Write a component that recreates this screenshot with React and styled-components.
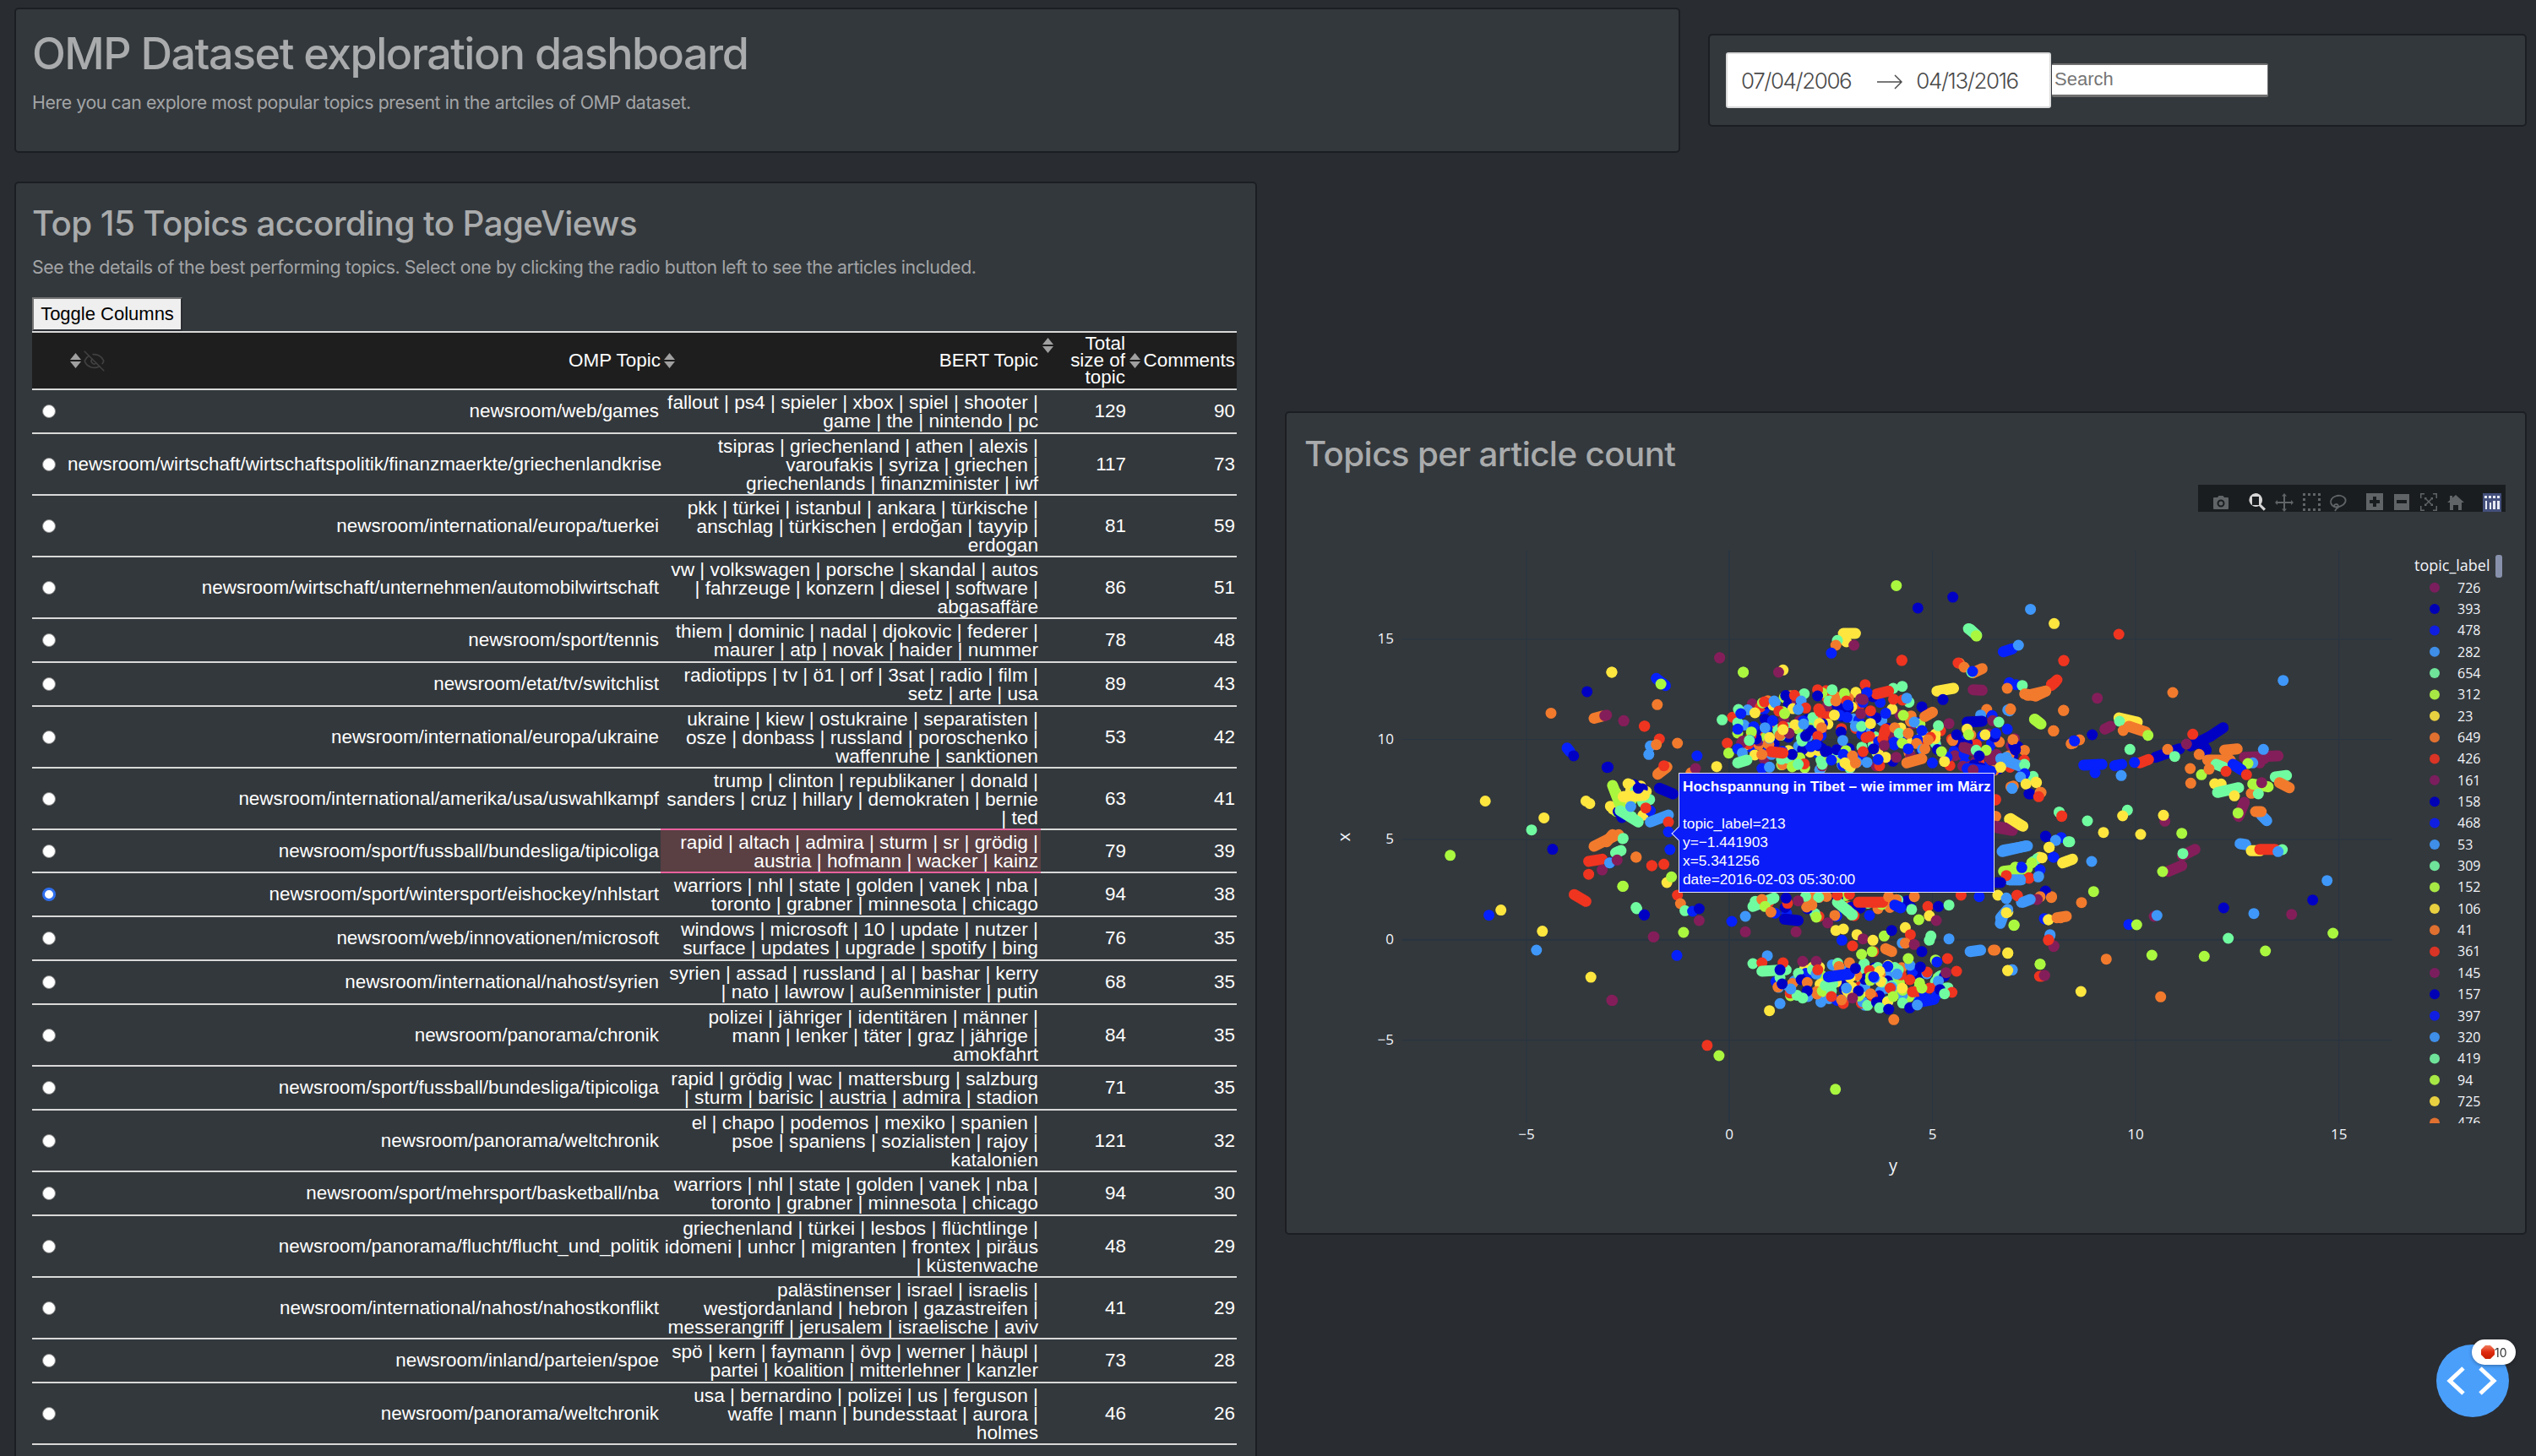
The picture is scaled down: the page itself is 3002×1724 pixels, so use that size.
import React from 'react'
import styled, { createGlobalStyle } from 'styled-components'
import { EyeOff } from 'lucide-react'

const GlobalStyle = createGlobalStyle`
	html, body {
		margin: 0;
		height: 1724px;
		overflow: hidden;
		background: #292c31;
	}
`

const Page = styled.div`
	display: flex;
	flex-direction: column;
	gap: 34px;
	padding: 9px 11px 0 17px;
	font-family: 'Liberation Sans', Arial, sans-serif;
	color: #fff;
`

const Row = styled.div`
	display: flex;
	align-items: ${(p) => p.$align || 'flex-start'};
	gap: 33px;
`

const Card = styled.section`
	box-sizing: border-box;
	flex: none;
	background: #33383c;
	border: 2px solid #1b1e22;
	border-radius: 5px;
`

const HeaderCard = styled(Card)`
	width: 1972px;
	height: 172px;
	padding: 23px 19px;
`

const DateCard = styled(Card)`
	display: flex;
	align-items: center;
	width: 969px;
	height: 110px;
	padding: 0 19px;
`

const TableCard = styled(Card)`
	width: 1471px;
	padding: 20px 19px 40px;
`

const GraphCard = styled(Card)`
	width: 1470px;
	height: 975px;
	margin-top: 272px;
	padding: 21px 21px 0;
`

const Title = styled.h1`
	margin: 0;
	font: 500 ${(p) => p.$size || 40.3}px/${(p) => p.$line || 56}px Inter, 'Liberation Sans', sans-serif;
	letter-spacing: ${(p) => p.$track || -0.6}px;
	color: #a9abac;
`

const Lead = styled.p`
	margin: ${(p) => p.$top || 9}px 0 0;
	font: 400 21.3px/28px Inter, 'Liberation Sans', sans-serif;
	letter-spacing: -0.4px;
	color: #a3a5a7;
`

const DateBox = styled.div`
	box-sizing: border-box;
	display: flex;
	align-items: center;
	width: 385px;
	height: 66px;
	padding: 0 16px;
	background: #fff;
	border: 2px solid #dbdbdb;
	border-radius: 3px;
	font: 300 26px Inter, 'Liberation Sans', sans-serif;
	letter-spacing: -1.4px;
	color: #4a4a4a;
`

const DateArrow = styled.svg`
	flex: none;
	width: 30px;
	height: 20px;
	margin: 4px 16px 0 31px;
`

const SearchInput = styled.input`
	box-sizing: border-box;
	width: 256px;
	height: 40px;
	margin-left: 1px;
	padding: 0 3px 2px;
	background: #fff;
	border: 0;
	border-top: 2px solid #6f6f6f;
	border-bottom: 3px solid #6f6f6f;
	border-right: 1px solid #6f6f6f;
	border-radius: 2px;
	font: 400 22px 'Liberation Sans', Arial, sans-serif;
	&::placeholder {
		color: #757575;
		opacity: 1;
	}
`

const ToggleButton = styled.button`
	display: block;
	box-sizing: border-box;
	width: 178px;
	height: 40px;
	margin-top: 22px;
	padding: 0;
	background: #efefef;
	border-style: solid;
	border-width: 2px;
	border-color: #767676 #2b2e33 #2b2e33 #767676;
	font: 400 22px 'Liberation Sans', Arial, sans-serif;
	color: #000;
`

const Table = styled.table`
	table-layout: fixed;
	width: 1426px;
	border-collapse: separate;
	border-spacing: 0;
	font-size: 22.45px;
	line-height: 22px;
`

const HeadRow = styled.tr`
	height: 70px;
`

const Th = styled.th`
	padding: 0;
	font-weight: 400;
	background: #1e1e1e;
	border-top: 2px solid #d9d9d9;
	border-bottom: 2px solid #d9d9d9;
`

const HeadInner = styled.div`
	display: flex;
	align-items: center;
	justify-content: ${(p) => p.$justify || 'flex-end'};
	padding-right: ${(p) => p.$right ?? 2}px;
`

const HeadStack = styled.div`
	width: 68px;
	line-height: 20px;
	text-align: right;
`

const SortIcon = styled.svg`
	flex: none;
	width: 13px;
	height: 18px;
	margin: ${(p) => p.$margin || 0};
	fill: #a0a0a0;
`

const HiddenEye = styled(EyeOff)`
	margin-left: 2px;
	color: #404040;
`

const BodyRow = styled.tr`
	height: ${(p) => p.$height}px;
`

const Td = styled.td`
	padding: 0 ${(p) => p.$right ?? 2}px 0 0;
	text-align: ${(p) => p.$align || 'right'};
	vertical-align: middle;
	white-space: nowrap;
	border-bottom: 2px solid #d9d9d9;
`

const TopicCell = styled(Td)`
	padding-right: 3px;
	font-size: 22.7px;
	background: ${(p) => (p.$hot ? '#5a3f43' : 'transparent')};
	border-bottom-color: ${(p) => (p.$hot ? '#e9629e' : '#d9d9d9')};
	box-shadow: ${(p) => (p.$hot ? '0 -2px 0 #e9629e' : 'none')};
`

const Radio = styled.input`
	display: block;
	appearance: none;
	box-sizing: border-box;
	width: 16px;
	height: 16px;
	margin: 0 0 0 12px;
	background: #fff;
	border-radius: 50%;
	border: ${(p) => (p.checked ? '3px solid #2f6fee' : '1px solid #8a8a8a')};
`

const ChartWrap = styled.div`
	position: relative;
	width: 1424px;
	height: 890px;
`

const ChartSvg = styled.svg`
	display: block;
	width: 1424px;
	height: 890px;
	font-family: 'Open Sans', sans-serif;
`

const Modebar = styled.div`
	position: absolute;
	top: 8px;
	right: 2px;
	display: flex;
	height: 32px;
	padding-left: 11px;
	background: #1a1d20;
	overflow: hidden;
`

const ModeGroup = styled.div`
	display: flex;
	margin-right: 11px;
`

const ModeButton = styled.div`
	display: flex;
	justify-content: center;
	width: 32px;
	height: 32px;
	padding-top: 10px;
	box-sizing: border-box;
	color: ${(p) => (p.$on ? '#d6d6d6' : '#606467')};
	svg {
		width: 22px;
		height: 22px;
		flex: none;
		background: ${(p) => (p.$box ? '#44507c' : 'transparent')};
	}
`

const HoverBox = styled.div`
	position: absolute;
	left: 443px;
	top: 349px;
	box-sizing: border-box;
	width: 374px;
	height: 142px;
	padding: 4px 2px 0 4px;
	background: #0a1cf8;
	border: 1.5px solid #e8e8f8;
	font-size: 17.3px;
	line-height: 22px;
	white-space: nowrap;
	&::before {
		content: '';
		position: absolute;
		left: -7px;
		top: 65px;
		width: 11px;
		height: 11px;
		background: #0a1cf8;
		border-left: 1.5px solid #e8e8f8;
		border-bottom: 1.5px solid #e8e8f8;
		transform: rotate(45deg);
	}
`

const HoverTitle = styled.div`
	margin-bottom: 22px;
	font-weight: 700;
`

const DebugWidget = styled.div`
	position: fixed;
	right: 32px;
	bottom: 46px;
	width: 86px;
	height: 86px;
	background: #4a9ffb;
	border-radius: 50%;
	svg.code {
		display: block;
		width: 86px;
		height: 86px;
	}
`

const ErrorBadge = styled.div`
	position: absolute;
	left: 42px;
	top: -6px;
	box-sizing: border-box;
	display: flex;
	align-items: center;
	width: 52px;
	height: 30px;
	padding-left: 11px;
	background: #fff;
	border-radius: 15px;
	box-shadow: 0 1px 4px rgba(0, 0, 0, 0.35);
	font: 400 14px Inter, sans-serif;
	color: #333;
`

const rows = [
	['newsroom/web/games', ['fallout | ps4 | spieler | xbox | spiel | shooter |', 'game | the | nintendo | pc'], 129, 90],
	['newsroom/wirtschaft/wirtschaftspolitik/finanzmaerkte/griechenlandkrise', ['tsipras | griechenland | athen | alexis |', 'varoufakis | syriza | griechen |', 'griechenlands | finanzminister | iwf'], 117, 73],
	['newsroom/international/europa/tuerkei', ['pkk | türkei | istanbul | ankara | türkische |', 'anschlag | türkischen | erdoğan | tayyip |', 'erdogan'], 81, 59],
	['newsroom/wirtschaft/unternehmen/automobilwirtschaft', ['vw | volkswagen | porsche | skandal | autos', '| fahrzeuge | konzern | diesel | software |', 'abgasaffäre'], 86, 51],
	['newsroom/sport/tennis', ['thiem | dominic | nadal | djokovic | federer |', 'maurer | atp | novak | haider | nummer'], 78, 48],
	['newsroom/etat/tv/switchlist', ['radiotipps | tv | ö1 | orf | 3sat | radio | film |', 'setz | arte | usa'], 89, 43],
	['newsroom/international/europa/ukraine', ['ukraine | kiew | ostukraine | separatisten |', 'osze | donbass | russland | poroschenko |', 'waffenruhe | sanktionen'], 53, 42],
	['newsroom/international/amerika/usa/uswahlkampf', ['trump | clinton | republikaner | donald |', 'sanders | cruz | hillary | demokraten | bernie', '| ted'], 63, 41],
	['newsroom/sport/fussball/bundesliga/tipicoliga', ['rapid | altach | admira | sturm | sr | grödig |', 'austria | hofmann | wacker | kainz'], 79, 39, 'hot'],
	['newsroom/sport/wintersport/eishockey/nhlstart', ['warriors | nhl | state | golden | vanek | nba |', 'toronto | grabner | minnesota | chicago'], 94, 38, 'selected'],
	['newsroom/web/innovationen/microsoft', ['windows | microsoft | 10 | update | nutzer |', 'surface | updates | upgrade | spotify | bing'], 76, 35],
	['newsroom/international/nahost/syrien', ['syrien | assad | russland | al | bashar | kerry', '| nato | lawrow | außenminister | putin'], 68, 35],
	['newsroom/panorama/chronik', ['polizei | jähriger | identitären | männer |', 'mann | lenker | täter | graz | jährige |', 'amokfahrt'], 84, 35],
	['newsroom/sport/fussball/bundesliga/tipicoliga', ['rapid | grödig | wac | mattersburg | salzburg', '| sturm | barisic | austria | admira | stadion'], 71, 35],
	['newsroom/panorama/weltchronik', ['el | chapo | podemos | mexiko | spanien |', 'psoe | spaniens | sozialisten | rajoy |', 'katalonien'], 121, 32],
	['newsroom/sport/mehrsport/basketball/nba', ['warriors | nhl | state | golden | vanek | nba |', 'toronto | grabner | minnesota | chicago'], 94, 30],
	['newsroom/panorama/flucht/flucht_und_politik', ['griechenland | türkei | lesbos | flüchtlinge |', 'idomeni | unhcr | migranten | frontex | piräus', '| küstenwache'], 48, 29],
	['newsroom/international/nahost/nahostkonflikt', ['palästinenser | israel | israelis |', 'westjordanland | hebron | gazastreifen |', 'messerangriff | jerusalem | israelische | aviv'], 41, 29],
	['newsroom/inland/parteien/spoe', ['spö | kern | faymann | övp | werner | häupl |', 'partei | koalition | mitterlehner | kanzler'], 73, 28],
	['newsroom/panorama/weltchronik', ['usa | bernardino | polizei | us | ferguson |', 'waffe | mann | bundesstaat | aurora |', 'holmes'], 46, 26]
]

const dotColors = {
	p: '#841e5a',
	d: '#0000c4',
	b: '#0520fb',
	l: '#3f97f9',
	m: '#70fba0',
	g: '#aaf73f',
	y: '#ffe63f',
	o: '#f27a2d',
	r: '#ef3420'
}

// dots read off the plot, each block in the scale of its own crop: x offset, y offset, x scale, y scale
const dotBlocks = [
	[1600, 650, 1.568, 1.96, `g 183 711;b 255 850;y 277 838;y 248 585;m 334 652;y 357 624;d 373 697;y 354 887;l 343 931;y 444 994;p 484 1048;o 370 381;y 483 286;d 437 331;o 450 393 465 388;p 470 387;p 505 399;r 544 411;b 400 462 405 470;d 412 480;d 474 507;y 435 585;y 442 591;r 413 802 435 818;g 503 783;m 528 832;d 543 849;p 561 900;r 660 1152;g 682 1176;g 898 1254;r 440 725 465 720;r 440 755;p 465 745;b 480 728;o 450 690 490 665;o 528 715;m 503 672;m 490 705 500 700;r 557 735;g 1011 85;d 1051 137;d 1116 112;l 1260 140;y 1304 173;r 1424 198;m 1145 185 1160 200;g 1160 202;p 683 253;g 727 286;r 1021 259;o 1128 265;r 1322 259`],
	[1900, 740, 2.8, 3, `y 790 30 830 30;y 800 60;m 770 55;o 765 72;p 825 72;b 750 100;m 1210 15 1230 35;g 1230 38;b 1320 95 1350 85;l 1370 72;p 380 116;r 984 125;y 22 168;g 458 168;y 590 160;p 575 168;b 170 190 200 215;g 185 210;r 1170 135;o 1250 155 1220 170;o 1190 150;m 1215 168;b 1218 165;r 1520 127;o 173 283;r 862 212;r 1490 205;o 1400 250 1460 235;r 1480 210;b 1340 205;b 1362 212;m 1383 215;o 1333 225;y 1100 235 1155 225;d 1120 265;p 1220 230 1250 232;m 985 218;m 955 225;r 900 245 940 235;b 868 240;p 855 265;l 1000 260;r 628 250;l 650 270;m 742 270;r 800 270;o 765 270;o 1520 303;o 1265 300;l 1340 305;o 1343 298;l 1245 320;b 1283 322;d 1200 345 1250 342;p 1285 340;m 1305 345;b 1333 370;o 1060 325 1085 310;l 1025 345;m 1105 358;p 1140 350;b 1050 375;g 1425 335 1445 352;o 1487 376;p 62 340;r 130 360;p 5 320;m 388 337;m 440 347;m 442 300;b 450 315;g 595 315;r 665 295;l 640 300;r 708 298;b 805 285;p 848 315;r 880 305;y 760 320;l 830 360;b 802 328;m 850 360;y 710 350;o 718 365;y 880 350;d 782 380;p 610 385;d 530 335;b 555 340;l 530 365;r 590 360;y 590 372;b 440 370;g 485 380;b 480 410;m 478 410;y 545 400;l 658 352;r 705 395;d 665 395;l 788 410;r 930 370 925 385;o 960 365;m 975 385;r 920 405;b 958 417;g 985 420;o 1005 385;p 925 428;r 865 400;r 405 420;g 410 455;b 305 465;o 240 420;r 180 405;l 150 430;l 145 460;o 170 425;b 440 440;l 455 455;m 440 490 470 480;d 620 460;b 700 425;r 550 450 590 455;o 520 460;d 730 450;b 790 460;r 855 450;o 820 465;d 890 440;y 930 470;p 965 470;b 1005 440;o 1060 440;g 1115 450;y 1125 485;b 1085 490;o 1000 490 1050 475;r 910 500;m 640 495;m 720 495;b 750 480;y 795 490;o 830 490;b 905 478;d 1200 420;b 1190 460;y 1260 390;b 1295 385;y 1200 370;g 1205 390;d 1165 390;p 1190 435 1290 470;m 1230 445;g 1263 445;d 1240 465;p 1280 480;l 1330 470;d 1360 443;l 1320 490;y 1310 505;b 1385 525;m 1390 495;y 1430 560;o 1345 575;l 1350 580;d 1405 600;r 1437 605;o 1445 595;o 1552 420;b 1553 412;b 1200 510 1280 520;p 1220 515;b 520 510;l 545 505;y 370 503;o 285 525;p 300 510;o 175 530 205 505;r 195 500;d 10 505;g 25 570 50 640;g 90 620;m 50 660 110 700;y 60 610 130 605;d 110 580;d 180 580 225 600;l 85 645;b 150 660;r 135 650;l 150 700 210 675;r 210 700;b 210 735;b 215 798;o 25 745 5 770;o 45 745;m 60 758;m 45 805;l 15 845;p 40 835;o 103 825;r 155 855;r 195 850;y 205 915;g 220 895;r 240 960;o 250 990;m 265 1015;b 290 1017;d 312 1008;p 312 1050;g 60 928;m 105 1008;d 130 1030;p 160 1108;g 260 1092;b 238 1174;p 22 1333;l 465 1035;b 420 1053;m 490 1000 560 970;o 520 975;g 530 1000;o 550 1020;d 600 970;p 640 980;d 595 1045 640 1050;p 633 1090;p 465 1090;g 700 1038;p 738 1058;m 770 985 820 1030;r 840 985 920 985;o 940 965;b 960 995 980 1005;r 770 960;o 1025 965;r 1070 1000;y 1075 1033;g 1040 1047;p 1098 1050;d 1105 1000;m 1140 995;b 1240 965;r 1180 960;l 1310 1060 1320 1030;y 1335 1020;g 1355 1067;d 1460 945;o 1480 965;b 1460 1045;y 1470 1047;o 1510 1040;l 1380 985;l 1330 970;p 1430 975;r 1365 960;d 1460 750;l 1495 765;m 1540 770;y 1472 790;b 1487 825;y 1530 840;l 1320 800 1400 785;o 1295 680;r 1295 620;y 1340 690 1385 715;p 1300 720 1350 730;m 1505 665;r 1513 680;y 1440 825;m 1420 840;g 1360 860;b 1380 860;l 1340 905 1380 905;l 1435 895;r 1405 900;r 1330 885;d 1300 915;y 765 1085;y 790 1080;b 785 1120;y 835 1100;r 820 1140;p 855 1115;y 888 1120;g 925 1105;r 890 1160;g 850 1170;g 885 1160;o 930 1150 950 1160;y 995 1075;r 1012 1100;d 950 1085;l 985 1130;o 995 1130;p 1025 1135;m 1075 1120;m 1080 1105;l 1140 1115;d 1050 1160;g 1005 1185;d 1045 1215;g 1095 1190;b 1100 1197;p 1130 1235;r 1165 1230;r 1135 1185;l 1210 1160 1245 1155;o 1287 1155;y 1335 1165;g 1442 1205;l 1350 1225;y 1335 1228;r 1440 1248;p 1457 1245;l 1475 1100;r 1470 1120;p 1488 1140;m 490 1203;l 538 1175;r 520 1200;m 520 1230 600 1225;r 590 1200;d 580 1225;p 655 1195;p 700 1195;d 650 1260;o 670 1270;g 720 1300;m 730 1280;l 700 1240;m 750 1300;r 705 1225;b 740 1250 810 1240;o 810 1200;d 830 1220;l 800 1290;d 840 1300;y 910 1230;g 880 1250;l 968 1240;b 890 1250;o 880 1310;r 945 1290;y 985 1290;r 1010 1260;g 955 1320;p 820 1325;r 750 1320;d 670 1300;m 655 1325;d 587 1275;l 580 1345;y 545 1370;d 900 1340;m 910 1360;d 940 1365;b 1040 1340 1090 1330;d 1010 1360;l 1035 1350;r 1075 1290;l 1105 1265;d 1110 1295;r 1150 1305;m 1125 1310;g 1050 1290;o 957 1402`],
	[2360, 800, 3, 3, `r 205 35 225 15;o 110 65 150 72;o 150 72 185 55;p 368 80;o 636 60;l 1028 17;l 50 122;o 60 120;o 248 124;g 145 155 165 170;o 212 196;p 395 190 415 180;d 350 210;y 445 150 510 165;m 447 162;o 460 195;o 480 180 540 200;g 548 212;o 275 242;o 305 228;b 287 232;d 815 185 770 215;d 770 215 700 250;d 740 240 755 265;d 660 260 575 290;o 618 262;r 707 208;p 685 243;m 643 287;r 520 310 550 298;b 500 308;b 455 315 430 320;b 320 318 385 315;b 360 345;l 453 355;m 484 262;o 730 280;o 760 300 840 300;o 820 265 865 260;p 890 290 1010 285;p 945 310;p 960 295;l 958 262;l 920 310;g 903 312;m 790 315 815 325;b 850 315 880 335;r 898 352;r 825 340;o 698 330;o 700 382;g 738 352;o 765 332;y 785 384;y 808 385;m 795 415 870 398;y 855 427;o 915 418;g 920 385 975 395;m 1000 360 1040 355;o 1015 380 1050 398;m 940 420;p 952 380;p 890 450 870 500;g 868 488;l 950 495 970 515;o 930 483 950 483;m 233 485;r 242 498;m 333 516;m 475 478;y 458 498;p 608 517;y 603 496;y 390 557;y 522 564;g 668 560;p 715 617 670 640;p 668 675 620 695;m 672 632;g 600 696;l 875 597 895 600;y 915 622 945 622;r 945 617 1000 617;m 1025 618;l 1010 625;l 30 625 115 605;d 185 572;b 240 575;l 220 585;m 265 590;y 197 610;b 212 645;m 155 650;y 172 647;g 135 665;y 245 665 280 652;l 348 660;g 35 695 120 685;b 100 682;b 165 690;r 125 718;l 160 713;l 55 725 95 725;r 45 710;d 25 735;d 183 767;o 165 785;p 155 795;o 205 788;r 85 782;y 15 780;l 45 792;l 105 805 130 795;g 355 767;o 312 806;l 25 860 50 830;y 45 842;g 73 886;b 180 863;y 194 867;o 225 860 258 855;b 480 884;g 508 885;p 570 855;l 580 852;d 817 825;l 924 845;p 1058 848;d 1133 797;l 1184 728;l 200 923;p 213 962;r 195 938;g 1205 915;m 833 933;g 562 993;g 748 997;g 965 978;o 400 1007;o 5 975;y 50 986;g 165 1025;l 65 1045;y 50 1047;r 170 1068;p 180 1065;y 310 1122;o 593 1141;p 10 280;l 25 295 90 320;d 77 263;m 110 318;m 140 358;b 110 348;l 95 360;y 150 378;y 115 385;d 130 420;o 165 415;r 160 430;o 70 392;l 65 400;y 25 325;r 5 442;o 5 500;p 5 535 65 545;y 60 508 95 530`]
]

const dots = dotBlocks.flatMap(([ox, oy, sx, sy, list]) =>
	list.split(';').map((item) => {
		const [color, ...nums] = item.trim().split(' ')
		const [x1, y1, x2 = x1, y2 = y1] = nums.map(Number)
		const px = (v) => (ox + v / sx).toFixed(1)
		const py = (v) => (oy + v / sy).toFixed(1)
		return { color: dotColors[color], d: `M${px(x1)} ${py(y1)}L${px(x2)} ${py(y2)}` }
	})
)

// the crowded middle of each cluster, too dense to read dot by dot: centre x, centre y, radius x, radius y, count, colours
const clusters = [
	[2172, 864, 128, 48, 230, 'pdblmgyor'],
	[2345, 892, 62, 24, 50, 'pdbor'],
	[2205, 1165, 105, 26, 130, 'dblmmgyor'],
	[2170, 1072, 100, 14, 45, 'mgdbor'],
	[1930, 948, 30, 24, 22, 'gmyyd']
]

let seed = 4711
const rand = () => {
	seed = (seed * 16807) % 2147483647
	return seed / 2147483647
}

const clusterDots = clusters.flatMap(([cx, cy, rx, ry, count, colors]) =>
	Array.from({ length: count }, () => {
		const angle = rand() * Math.PI * 2
		const dist = Math.sqrt(rand())
		const x = (cx + Math.cos(angle) * dist * rx).toFixed(1)
		const y = (cy + Math.sin(angle) * dist * ry).toFixed(1)
		return { color: dotColors[colors[Math.floor(rand() * colors.length)]], d: `M${x} ${y}L${x} ${y}` }
	})
)

const allDots = [...clusterDots, ...dots]

const legendColors = ['#7b1e5e', '#0000b5', '#0f1ee0', '#3f8ee8', '#6fe39a', '#a8e845', '#e8d040', '#e07030', '#d93425']
const legendItems = ['726', '393', '478', '282', '654', '312', '23', '649', '426', '161', '158', '468', '53', '309', '152', '106', '41', '361', '145', '157', '397', '320', '419', '94', '725', '476']

const xTicks = [['\u22125', 1807], ['0', 2047], ['5', 2287.5], ['10', 2528], ['15', 2768.7]]
const yTicks = [['15', 757], ['10', 875.5], ['5', 994.3], ['0', 1112.8], ['\u22125', 1231.6]]

const Sort = ({ margin }) => (
	<SortIcon viewBox="0 0 13 18" $margin={margin}>
		<path d="M6.5 0 13 8H0zM0 10h13l-6.5 8z" />
	</SortIcon>
)

const Scatter = () => (
	<ChartSvg viewBox="1544 566 1424 890">
		<defs>
			<clipPath id="legend-clip">
				<rect x="2850" y="650" width="118" height="680" />
			</clipPath>
		</defs>
		{xTicks.map(([label, x]) => (
			<line key={label} x1={x} x2={x} y1="652" y2="1330" stroke="#283442" strokeWidth={label === '0' ? 2 : 1} />
		))}
		{yTicks.map(([label, y]) => (
			<line key={label} x1="1660" x2="2832" y1={y} y2={y} stroke="#283442" strokeWidth={label === '0' ? 2 : 1} />
		))}
		{allDots.map((dot, i) => (
			<path key={i} d={dot.d} stroke={dot.color} strokeWidth="13" strokeLinecap="round" fill="none" />
		))}
		{xTicks.map(([label, x]) => (
			<text key={label} x={x} y="1349" textAnchor="middle" fontSize="17" fill="#f2f5fa">{label}</text>
		))}
		{yTicks.map(([label, y]) => (
			<text key={label} x="1650" y={y + 5} textAnchor="end" fontSize="17" fill="#f2f5fa">{label}</text>
		))}
		<text x="2241" y="1387" textAnchor="middle" fontSize="20" fill="#f2f5fa">y</text>
		<text x="1598" y="991" textAnchor="middle" fontSize="20" fill="#f2f5fa" transform="rotate(-90 1598 991)">x</text>
		<text x="2858" y="676" fontSize="18" fill="#f2f5fa">topic_label</text>
		<rect x="2954" y="657" width="8" height="27" rx="3" fill="#8891ac" />
		<g clipPath="url(#legend-clip)">
			{legendItems.map((item, i) => (
				<g key={item}>
					<ellipse cx="2882" cy={695.7 + i * 25.35} rx="6" ry="6" fill={legendColors[i % 9]} />
					<text x="2909" y={701.5 + i * 25.35} fontSize="16" fill="#f2f5fa">{item}</text>
				</g>
			))}
		</g>
	</ChartSvg>
)

const ModeIcon = ({ children }) => (
	<svg viewBox="0 0 22 22" fill="currentColor" stroke="none">{children}</svg>
)

const Toolbar = () => (
	<Modebar>
		<ModeGroup>
			<ModeButton>
				<ModeIcon><path fillRule="evenodd" d="M3 5h4l1.5-2h5L15 5h4a1 1 0 0 1 1 1v12a1 1 0 0 1-1 1H3a1 1 0 0 1-1-1V6a1 1 0 0 1 1-1zm8 2.5a4.5 4.5 0 1 0 0 9 4.5 4.5 0 0 0 0-9zm0 2a2.5 2.5 0 1 1 0 5 2.5 2.5 0 0 1 0-5z" /></ModeIcon>
			</ModeButton>
		</ModeGroup>
		<ModeGroup>
			<ModeButton $on>
				<ModeIcon><path fillRule="evenodd" d="M9 0a8 8 0 0 1 6.3 12.9l5.7 5.7-2.2 2.2-5.7-5.7A8 8 0 1 1 9 0zM5 4v10h8V4z" /></ModeIcon>
			</ModeButton>
			<ModeButton>
				<ModeIcon><path d="m11 0 3 3.5h-2V10h7V8l3 3-3 3v-2h-7v6.500h2L11 22l-3-3.500h2V12H3v2l-3-3 3-3v2h7V3.500H8z" /></ModeIcon>
			</ModeButton>
			<ModeButton>
				<ModeIcon><path d="M1 0h3v3H1zM7 0h3v3H7zM13 0h3v3h-3zM19 0h3v3h-3zM1 6h3v3H1zM19 6h3v3h-3zM1 12h3v3H1zM19 12h3v3h-3zM1 18h3v3H1zM7 18h3v3H7zM13 18h3v3h-3zM19 18h3v3h-3z" /></ModeIcon>
			</ModeButton>
			<ModeButton>
				<ModeIcon><path fill="none" stroke="currentColor" strokeWidth="1.800" d="M6 16C2 14 1 10 3 7s7-5 11-4 7 4 5 8-8 6-13 5zm0 0a2.500 2.500 0 1 1 3 2l-2 3" /></ModeIcon>
			</ModeButton>
		</ModeGroup>
		<ModeGroup>
			<ModeButton>
				<ModeIcon><path fillRule="evenodd" d="M1 0h20v20H1zm8 4v4H5v4h4v4h4v-4h4V8h-4V4z" /></ModeIcon>
			</ModeButton>
			<ModeButton>
				<ModeIcon><path fillRule="evenodd" d="M2 1h18v19H2zm3 7v4h12V8z" /></ModeIcon>
			</ModeButton>
			<ModeButton>
				<ModeIcon><path d="M1 0h5v1.500H2.500V6H1zM16 0h5v6h-1.500V1.500H16zM1 15h1.500v4.500H6V21H1zM19.500 15H21v6h-5v-1.500h3.500zM6 5h3L8 6l3 3 3-3-1-1h3v3l-1-1-3 3 3 3 1-1v3h-3l1-1-3-3-3 3 1 1H6v-3l1 1 3-3-3-3-1 1z" /></ModeIcon>
			</ModeButton>
			<ModeButton>
				<ModeIcon><path d="M11 2 21 11h-3v9h-4v-6H8v6H4v-9H1l3-2.700V3h3v2.500z" /></ModeIcon>
			</ModeButton>
		</ModeGroup>
		<ModeButton $on $box>
			<ModeIcon><path fill="#e6e9f2" d="M2 3h3v3H2zM7 3h3v3H7zM12 3h3v3h-3zM17 3h3v3h-3zM3 9h2v10H3zM8 11h2v8H8zM12 9h3v10h-3zM17 9h3v10h-3z" /></ModeIcon>
		</ModeButton>
	</Modebar>
)

const rowHeight = (lines, flag) => {
	if (flag === 'hot') return 51
	return lines === 3 ? 73 : 52
}

const App = () => (
	<Page>
		<GlobalStyle />
		<Row $align="center">
			<HeaderCard>
				<Title $size={52} $line={60} $track={-1.5}>OMP Dataset exploration dashboard</Title>
				<Lead $top={13}>Here you can explore most popular topics present in the artciles of OMP dataset.</Lead>
			</HeaderCard>
			<DateCard>
				<DateBox>
					<span>07/04/2006</span>
					<DateArrow viewBox="0 0 30 20" fill="none" stroke="#4c4c4c" strokeWidth="1.500">
						<path d="M0 10h29M21 2l8 8-8 8" />
					</DateArrow>
					<span>04/13/2016</span>
				</DateBox>
				<SearchInput placeholder="Search" />
			</DateCard>
		</Row>
		<Row>
			<TableCard>
				<Title>Top 15 Topics according to PageViews</Title>
				<Lead>See the details of the best performing topics. Select one by clicking the radio button left to see the articles included.</Lead>
				<ToggleButton>Toggle Columns</ToggleButton>
				<Table>
					<colgroup>
						<col width="42" />
						<col width="702" />
						<col width="450" />
						<col width="103" />
						<col width="129" />
					</colgroup>
					<thead>
						<HeadRow>
							<Th />
							<Th>
								<HeadInner $justify="space-between">
									<HeadInner $justify="flex-start" $right={0}>
										<Sort margin="0 0 0 3px" />
										<HiddenEye size={27} strokeWidth={1.5} />
									</HeadInner>
									<HeadInner $right={0}>
										OMP Topic
										<Sort margin="0 -19px 0 4px" />
									</HeadInner>
								</HeadInner>
							</Th>
							<Th>
								<HeadInner $right={3}>
									BERT Topic
									<Sort margin="-36px -18px 0 5px" />
								</HeadInner>
							</Th>
							<Th>
								<HeadInner $right={2}>
									<HeadStack>Total size of topic</HeadStack>
									<Sort margin="0 -17px 0 5px" />
								</HeadInner>
							</Th>
							<Th>
								<HeadInner>Comments</HeadInner>
							</Th>
						</HeadRow>
					</thead>
					<tbody>
						{rows.map(([omp, topics, size, comments, flag], i) => (
							<BodyRow key={i} $height={rowHeight(topics.length, flag)}>
								<Td $align="left">
									<Radio type="radio" checked={flag === 'selected'} readOnly />
								</Td>
								<Td>{omp}</Td>
								<TopicCell $hot={flag === 'hot'}>
									{topics.map((line, j) => (
										<div key={j}>{line}</div>
									))}
								</TopicCell>
								<Td>{size}</Td>
								<Td>{comments}</Td>
							</BodyRow>
						))}
					</tbody>
				</Table>
			</TableCard>
			<GraphCard>
				<Title>Topics per article count</Title>
				<ChartWrap>
					<Scatter />
					<Toolbar />
					<HoverBox>
						<HoverTitle>Hochspannung in Tibet – wie immer im März</HoverTitle>
						<div>topic_label=213</div>
						<div>y=−1.441903</div>
						<div>x=5.341256</div>
						<div>date=2016-02-03 05:30:00</div>
					</HoverBox>
				</ChartWrap>
			</GraphCard>
		</Row>
		<DebugWidget>
			<svg className="code" viewBox="0 0 86 86" fill="none" stroke="#fff" strokeWidth="5">
				<path d="M32 28 16 43l16 15M52 28l16 15-16 15" />
			</svg>
			<ErrorBadge>
				<svg width="16" height="16" viewBox="0 0 16 16">
					<defs>
						<linearGradient id="stop-fill" x1="0" y1="0" x2="0" y2="1">
							<stop offset="0" stopColor="#f07a5a" />
							<stop offset="0.5" stopColor="#e02b10" />
							<stop offset="1" stopColor="#c42000" />
						</linearGradient>
					</defs>
					<path d="M5 0h6l5 5v6l-5 5H5l-5-5V5z" fill="url(#stop-fill)" />
				</svg>
				10
			</ErrorBadge>
		</DebugWidget>
	</Page>
)

export default App
